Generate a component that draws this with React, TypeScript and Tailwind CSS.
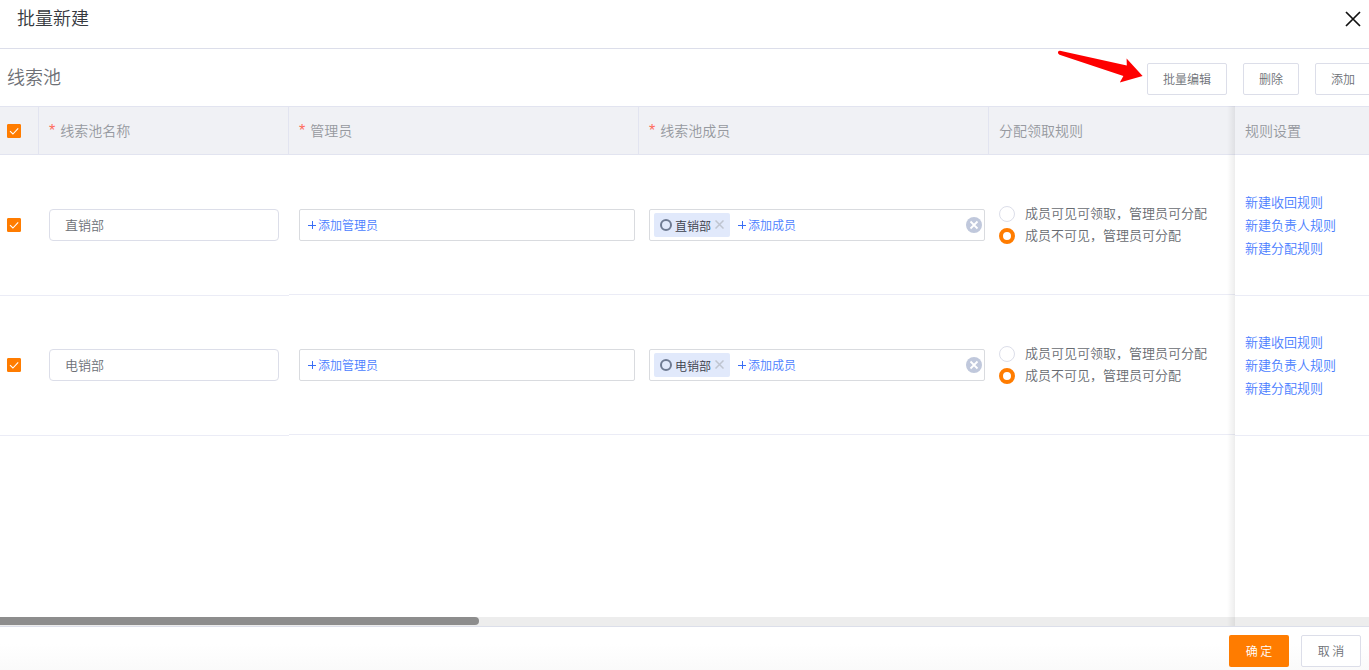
import { useState } from "react";

type Pool = {
  id: number;
  name: string;
};

const pools: Pool[] = [
  { id: 1, name: "直销部" },
  { id: 2, name: "电销部" },
];

const ruleLinks = ["新建收回规则", "新建负责人规则", "新建分配规则"];

const assignOptions = [
  { value: "visible", label: "成员可见可领取，管理员可分配" },
  { value: "hidden", label: "成员不可见，管理员可分配" },
];

function Checkbox({ label }: { label: string }) {
  return (
    <span className="grid size-3.5">
      <input
        type="checkbox"
        defaultChecked
        aria-label={label}
        className="peer col-start-1 row-start-1 size-3.5 appearance-none rounded-[1px] border border-[#dcdfe6] bg-white checked:border-[#ff7c00] checked:bg-[#ff7c00]"
      />
      <svg
        viewBox="0 0 14 14"
        className="pointer-events-none invisible col-start-1 row-start-1 size-3.5 peer-checked:visible"
        fill="none"
        stroke="#fff"
        strokeWidth="1.1"
      >
        <path d="M3 7.2 5.9 10 11.2 4.3" />
      </svg>
    </span>
  );
}

function HeadCell({ children, required }: { children: string; required?: boolean }) {
  return (
    <th className="border-y border-r border-[#e2e4f0] pb-0.5 pl-2.5 text-left text-sm font-[350] last:border-r-0">
      {required && (
        <span className="mr-[5px] font-['Liberation_Sans',sans-serif] text-base leading-none font-normal text-[#ff6a5c]">*</span>
      )}
      {children}
    </th>
  );
}

function PickerLink({ children }: { children: string }) {
  return (
    <button type="button" className="flex items-center gap-0.5 text-xs text-[#4a7dff]">
      <svg viewBox="0 0 8 8" className="size-2" stroke="#3a6df5" strokeWidth="1">
        <path d="M0 4.5h8M4.5 0v8" />
      </svg>
      {children}
    </button>
  );
}

function MemberTag({ name }: { name: string }) {
  return (
    <span className="flex h-6 items-center gap-[3px] rounded-xs bg-[#e1e9fb] px-1.5 text-xs text-[#3c404b]">
      <svg viewBox="0 0 12 12" className="size-3" fill="none" stroke="#6f7b92" strokeWidth="2">
        <circle cx="6" cy="6" r="5" />
      </svg>
      <span className="pt-0.5">{name}</span>
      <button type="button" aria-label="移除" className="ml-px">
        <svg viewBox="0 0 9 9" className="size-[9px]" stroke="#bfc5d0" strokeWidth="1.5">
          <path d="M.5 .5l8 8M8.5 .5l-8 8" />
        </svg>
      </button>
    </span>
  );
}

function PoolRow({ pool, first }: { pool: Pool; first: boolean }) {
  const [rule, setRule] = useState("hidden");
  const sideCell = first ? "pb-0" : "border-t border-[#ebecf6] pb-px";

  return (
    <tr className="h-[140px]">
      <td className={`pl-[7px] ${sideCell}`}>
        <Checkbox label={pool.name} />
      </td>
      <td className={`px-2.5 ${sideCell}`}>
        <input
          type="text"
          defaultValue={pool.name}
          aria-label="线索池名称"
          className="block h-8 w-full rounded border border-[#dcdee9] px-[15px] pb-0.5 text-[13px] text-[#6d7076]"
        />
      </td>
      <td className="border-b border-[#ebecf6] pr-1 pl-2.5">
        <div className="flex h-8 items-center rounded-xs border border-[#d9dbdf] px-2">
          <PickerLink>添加管理员</PickerLink>
        </div>
      </td>
      <td className="border-b border-[#ebecf6] pr-1 pl-2.5">
        <div className="flex h-8 items-center rounded-xs border border-[#d9dbdf] pr-0.5 pl-1">
          <MemberTag name={pool.name} />
          <span className="ml-2">
            <PickerLink>添加成员</PickerLink>
          </span>
          <button type="button" aria-label="清空" className="ml-auto">
            <svg viewBox="0 0 16 16" className="size-4" stroke="#fff" strokeWidth="1.8">
              <circle cx="8" cy="8" r="8" fill="#c0c8dc" stroke="none" />
              <path d="M4.5 4.5l7 7M11.5 4.5l-7 7" />
            </svg>
          </button>
        </div>
      </td>
      <td className="border-b border-[#ebecf6] pl-2.5">
        {assignOptions.map((option) => (
          <label
            key={option.value}
            className="flex h-[22px] items-center gap-2.5 text-[13px] whitespace-nowrap text-[#686b71]"
          >
            <input
              type="radio"
              name={`assign-${pool.id}`}
              checked={rule === option.value}
              onChange={() => setRule(option.value)}
              className="size-4 appearance-none rounded-full border border-[#dcdee9] bg-white checked:border-4 checked:border-[#ff7c00]"
            />
            <span className="pb-0.5">{option.label}</span>
          </label>
        ))}
      </td>
      <td className={`pl-2.5 ${sideCell}`}>
        <div className="pb-0.5">
          {ruleLinks.map((text) => (
            <a key={text} href="#" className="block text-[13px] leading-[23px] text-[#4a7dff]">
              {text}
            </a>
          ))}
        </div>
      </td>
    </tr>
  );
}

export default function App() {
  return (
    <div className="flex h-screen flex-col overflow-hidden bg-white font-['Noto_Sans_CJK_SC',sans-serif] font-[350] text-[#6d7076]">
      <header className="flex h-[49px] shrink-0 items-start justify-between border-b border-[#dcdeea] pt-[5px] pr-2 pl-[17px]">
        <h1 className="text-lg leading-6 text-[#36393e]">批量新建</h1>
        <button type="button" aria-label="关闭" className="pt-1.5">
          <svg viewBox="0 0 16 16" className="size-4" stroke="#111" strokeWidth="1.7">
            <path d="M1 1l14 14M15 1 1 15" />
          </svg>
        </button>
      </header>

      <div className="flex h-[57px] shrink-0 items-center justify-between pl-[7px]">
        <h2 className="pb-1 text-lg">线索池</h2>
        <div className="relative -mr-0.5 flex gap-4 pt-0.5 text-xs">
          <svg
            viewBox="0 0 86 34"
            className="pointer-events-none absolute -top-3 right-full mr-1 h-[34px] w-[86px]"
            fill="#fe0000"
          >
            <path d="M3 1.8Q1 1.6.9 3.6Q1 5.2 2.5 5.8L66.4 27 62.8 33.6 85.6 27 69.6 9.4 69.8 16.4Z" />
          </svg>
          <button type="button" className="h-8 rounded-xs border border-[#dcdee9] px-[15px]">
            批量编辑
          </button>
          <button type="button" className="h-8 rounded-xs border border-[#dcdee9] px-[15px]">
            删除
          </button>
          <button type="button" className="h-8 rounded-xs border border-[#dcdee9] px-[15px]">
            添加
          </button>
        </div>
      </div>

      <main className="relative flex min-h-0 flex-1 flex-col">
        <table className="w-full table-fixed border-separate border-spacing-0">
          <colgroup>
            <col className="w-[39px]" />
            <col className="w-[250px]" />
            <col className="w-[350px]" />
            <col className="w-[350px]" />
            <col />
            <col className="w-[134px]" />
          </colgroup>
          <thead>
            <tr className="h-[49px] bg-[#f0f1f5] text-[#96999f]">
              <th className="border-y border-r border-[#e2e4f0] pl-[7px]">
                <Checkbox label="全选" />
              </th>
              <HeadCell required>线索池名称</HeadCell>
              <HeadCell required>管理员</HeadCell>
              <HeadCell required>线索池成员</HeadCell>
              <th className="border-y border-[#e2e4f0] pb-0.5 pl-2.5 text-left text-sm font-[350]">分配领取规则</th>
              <HeadCell>规则设置</HeadCell>
            </tr>
          </thead>
          <tbody>
            {pools.map((pool, index) => (
              <PoolRow key={pool.id} pool={pool} first={index === 0} />
            ))}
            <tr>
              <td colSpan={2} className="border-t border-[#ebecf6]" />
              <td colSpan={3} />
              <td className="border-t border-[#ebecf6]" />
            </tr>
          </tbody>
        </table>

        {/* horizontal scrollbar */}
        <div className="mt-auto h-[9px] bg-[#ededed]">
          <div className="h-2 w-[35%] rounded-r bg-[#8d8d8d]" />
        </div>

        {/* shadow of the fixed column */}
        <div className="pointer-events-none absolute inset-y-0 right-[134px] w-2 bg-linear-to-l from-black/7 to-transparent" />
      </main>

      <footer className="flex h-11 shrink-0 items-start justify-end gap-3 border-t border-[#dcdfea] bg-linear-to-b from-white from-40% to-[#fafafa] pt-2 pr-2 text-xs">
        <button type="button" className="h-8 w-[60px] rounded-xs bg-[#ff7c00] text-white">
          确 定
        </button>
        <button type="button" className="h-8 w-[60px] rounded-xs border border-[#dcdee9] bg-white">
          取 消
        </button>
      </footer>
    </div>
  );
}
